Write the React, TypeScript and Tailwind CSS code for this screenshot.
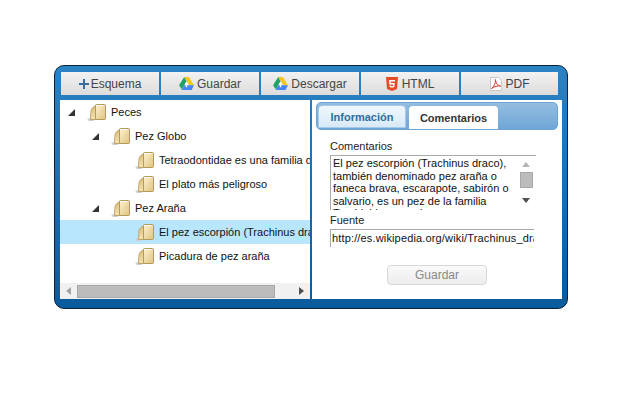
import React from "react";

const Folder = () => (
  <svg width="22" height="20" viewBox="0 0 22 20" className="shrink-0">
    <defs>
      <linearGradient id="fg" x1="0" y1="0" x2="1" y2="1">
        <stop offset="0" stopColor="#fdf3d2" />
        <stop offset="1" stopColor="#dfc27e" />
      </linearGradient>
      <linearGradient id="fl" x1="0" y1="0" x2="0" y2="1">
        <stop offset="0" stopColor="#dcbf7c" />
        <stop offset="1" stopColor="#f5e4b4" />
      </linearGradient>
    </defs>
    <ellipse cx="4" cy="17.5" rx="3.5" ry="1.5" fill="#cfcfcf" />
    <path d="M3.5 17.5 L4 9 Q4.5 6 6.5 5 L8.5 4 L8.5 17.5 Z" fill="url(#fl)" stroke="#bfa566" strokeWidth="1" />
    <path d="M8.5 3.5 Q8.5 2.5 9.5 2.5 L17.5 2.5 Q18.5 2.5 18.5 3.5 L18.5 16.5 Q18.5 17.5 17.5 17.5 L8.5 17.5 Z" fill="url(#fg)" stroke="#b69a5c" strokeWidth="1" />
    <path d="M9.5 3.5 L16 3.5" stroke="#fff" strokeWidth="1" />
  </svg>
);

const Caret = () => (
  <svg width="7" height="7" viewBox="0 0 7 7" className="shrink-0">
    <path d="M7 0 L7 7 L0 7 Z" fill="#333" />
  </svg>
);

const Plus = () => (
  <svg width="10" height="10" viewBox="0 0 10 10" className="shrink-0">
    <path d="M4 0 H6 V4 H10 V6 H6 V10 H4 V6 H0 V4 H4 Z" fill="#3c6a9c" />
  </svg>
);

const Drive = () => (
  <svg width="15" height="13" viewBox="0 0 16 14" className="shrink-0">
    <path d="M5.5 0 L10.5 0 L16 9 L11 9 Z" fill="#f6c51b" />
    <path d="M5.5 0 L8 4.5 L3 13.5 L0 9 Z" fill="#1fa463" />
    <path d="M3 14 L5.5 9 L16 9 L13.5 14 Z" fill="#4285f4" />
    <path d="M8 5 L10 8 L8.8 8 L8.8 11 L7.2 11 L7.2 8 L6 8 Z" fill="#fff" />
  </svg>
);

const Html5 = () => (
  <svg width="12" height="14" viewBox="0 0 12 14" className="shrink-0">
    <path d="M0 0 L12 0 L11 12 L6 14 L1 12 Z" fill="#e44d26" />
    <path d="M3 3 L9 3 L8.8 4.6 L4.7 4.6 L4.8 6 L8.7 6 L8.3 10 L6 10.8 L3.7 10 L3.6 8.4 L5 8.4 L5.1 9 L6 9.4 L7 9 L7.1 7.5 L3.3 7.5 Z" fill="#fff" />
  </svg>
);

const Pdf = () => (
  <svg width="12" height="14" viewBox="0 0 12 14" className="shrink-0">
    <path d="M0.5 0.5 L8.5 0.5 L11.5 3.5 L11.5 13.5 L0.5 13.5 Z" fill="#fff" stroke="#c9c9c9" />
    <path d="M1.5 11.5 C4 10 6 5 5.5 2.5 C5.5 6 8 9 10.5 9 C8 8.6 4 9.5 1.5 11.5 Z" fill="none" stroke="#d8392b" strokeWidth="1" />
  </svg>
);

const TB = ({ icon, label, w, gap }: { icon: React.ReactNode; label: string; w: string; gap: string }) => (
  <div className={`${w} ${gap} h-[23px] flex items-center justify-center bg-gradient-to-b from-[#f2f2f2] to-[#dcdcdc] text-[#444] text-[12px] leading-none`}>
    {icon}
    <span>{label}</span>
  </div>
);

const Row = ({ indent, caret, label, selected }: { indent: string; caret?: boolean; label: string; selected?: boolean }) => (
  <div className={`h-6 flex items-center whitespace-nowrap text-[11px] text-[#111] ${indent} ${selected ? "bg-[#b8e6fd]" : ""}`}>
    <div className="w-[19px] shrink-0 flex items-center">{caret && <Caret />}</div>
    <Folder />
    <span className="ml-[2px]">{label}</span>
  </div>
);

export default function App() {
  return (
    <div className="w-[640px] h-[400px] bg-white pt-[65px] pl-[54px] font-['Liberation_Sans',Arial,sans-serif]">
      <div className="w-[514px] h-[244px] rounded-[10px] border border-[#0c2238] bg-gradient-to-b from-[#2a83c4] to-[#0a5a9e] pt-[6px] pl-[5px] flex flex-col">
        <div className="flex pl-px gap-[2px]">
          <TB w="w-[98px]" gap="gap-[2px]" label="Esquema" icon={<Plus />} />
          <TB w="w-[98px]" gap="gap-[3px]" label="Guardar" icon={<Drive />} />
          <TB w="w-[98px]" gap="gap-[3px]" label="Descargar" icon={<Drive />} />
          <TB w="w-[98px]" gap="gap-[4px]" label="HTML" icon={<Html5 />} />
          <TB w="w-[97px]" gap="gap-[4px]" label="PDF" icon={<Pdf />} />
        </div>
        <div className="flex mt-[5px] h-[199px] gap-[2px]">
          <div className="w-[250px] bg-white flex flex-col overflow-hidden">
            <div className="flex-1 overflow-hidden">
              <Row indent="pl-[8px]" caret label="Peces" />
              <Row indent="pl-[32px]" caret label="Pez Globo" />
              <Row indent="pl-[56px]" label="Tetraodontidae es una familia de peces" />
              <Row indent="pl-[56px]" label="El plato más peligroso" />
              <Row indent="pl-[32px]" caret label="Pez Araña" />
              <Row indent="pl-[56px]" selected label="El pez escorpión (Trachinus draco), también" />
              <Row indent="pl-[56px]" label="Picadura de pez araña" />
            </div>
            <div className="h-4 bg-[#f1f1f1] flex items-center">
              <div className="w-[17px] flex justify-center">
                <svg width="5" height="8" viewBox="0 0 5 8"><path d="M5 0 L5 8 L0 4 Z" fill="#a3a3a3" /></svg>
              </div>
              <div className="w-[198px] h-[13px] bg-[#bcbcbc] border border-[#a8a8a8]" />
              <div className="flex-1 flex justify-end pr-[6px]">
                <svg width="5" height="8" viewBox="0 0 5 8"><path d="M0 0 L0 8 L5 4 Z" fill="#505050" /></svg>
              </div>
            </div>
          </div>
          <div className="w-[250px] bg-white pt-[2px] pl-[4px]">
            <div className="w-[242px] h-[28px] rounded-[5px] border border-[#6aa5d6] bg-gradient-to-b from-[#93bde0] to-[#6fa6d6] flex items-end pl-px gap-[3px]">
              <div className="w-[88px] h-[23px] mb-px pt-[2px] rounded-t-[4px] border border-[#a5c9e8] bg-gradient-to-b from-[#f0f7fd] to-[#d8e9f7] flex items-center justify-center text-[11px] font-bold text-[#2e6e9e]">Información</div>
              <div className="w-[89px] h-[23px] pt-[2px] rounded-t-[4px] bg-white flex items-center justify-center text-[11px] font-bold text-[#333]">Comentarios</div>
            </div>
            <div className="pl-[14px] text-[11px] text-[#222]">
              <div className="mt-[10px] leading-[13px]">Comentarios</div>
              <div className="mt-[2px] w-[206px] h-[55px] border-t border-l border-[#aaa] flex overflow-hidden">
                <div className="flex-1 pl-[2px] pt-[1px] leading-[12.6px] text-[#111] overflow-hidden">
                  El pez escorpión (Trachinus draco), también denominado pez araña o faneca brava, escarapote, sabirón o salvario, es un pez de la familia Trachinidae que vive en zonas costeras
                </div>
                <div className="w-[18px] shrink-0 pr-[2px] flex flex-col items-center">
                  <svg width="8" height="5" viewBox="0 0 8 5" className="mt-[6px]"><path d="M4 0 L8 5 L0 5 Z" fill="#b5b5b5" /></svg>
                  <div className="w-[13px] h-[16px] mt-[5px] bg-[#bcbcbc] border border-[#a8a8a8]" />
                  <svg width="8" height="5" viewBox="0 0 8 5" className="mt-[10px]"><path d="M0 0 L8 0 L4 5 Z" fill="#505050" /></svg>
                </div>
              </div>
              <div className="mt-[4px] leading-[13px]">Fuente</div>
              <div className="mt-[2px] w-[204px] h-[18px] border-t border-l border-[#aaa] pl-px flex items-center whitespace-nowrap overflow-hidden text-[#111] tracking-[0.15px]">
                http://es.wikipedia.org/wiki/Trachinus_draco
              </div>
              <div className="mt-[18px] ml-[57px] w-[100px] h-[20px] rounded-[4px] border border-[#d8d8d8] bg-gradient-to-b from-[#fafafa] to-[#ececec] flex items-center justify-center text-[12px] leading-none pb-px text-[#888]">Guardar</div>
            </div>
          </div>
        </div>
      </div>
    </div>
  );
}
